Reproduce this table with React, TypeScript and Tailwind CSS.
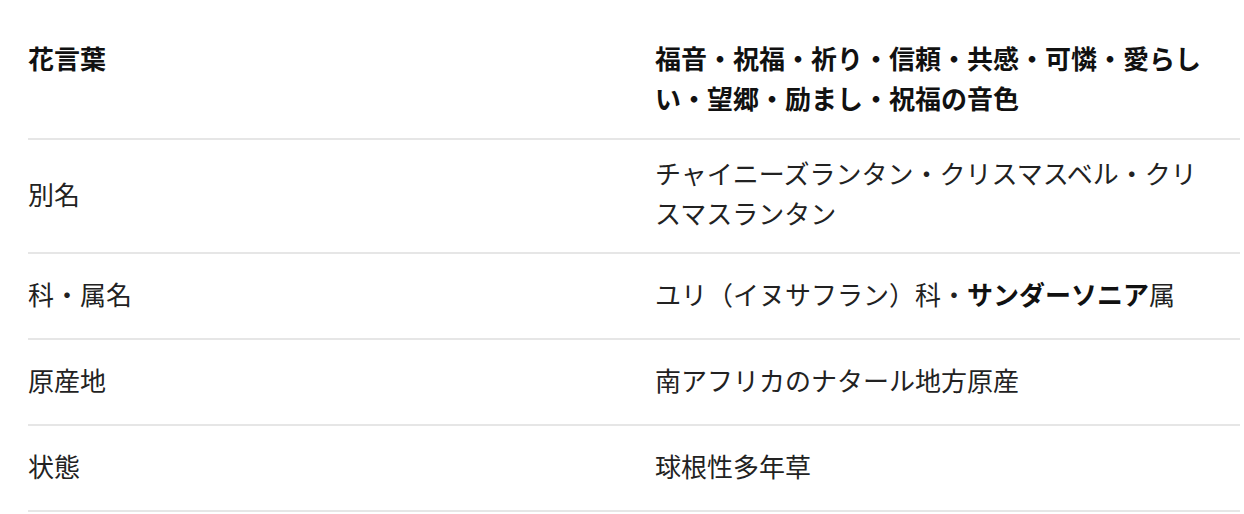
import React from "react";

const Row = ({
  label,
  children,
  header = false,
  pad = "pb-[4px]",
}: {
  label: string;
  children: React.ReactNode;
  header?: boolean;
  pad?: string;
}) => (
  <div
    className={`flex min-h-[86px] border-b-2 border-[#e6e6e6] ${
      header ? "items-start font-bold text-[#111]" : "items-center text-[#222]"
    }`}
  >
    <div className={`w-[627px] shrink-0 ${header ? pad : "pb-[4px]"}`}>{label}</div>
    <div className={`flex-1 pr-[21px] ${pad}`}>{children}</div>
  </div>
);

export default function App() {
  return (
    <div
      className="bg-white w-[1244px] h-[514px] overflow-hidden"
      style={{ fontFamily: '"Noto Sans CJK JP", "Noto Sans", sans-serif' }}
    >
      <div className="ml-[28px] mt-[24px] w-[1212px] text-[26px] leading-[40px]">
        <Row label="花言葉" header pad="pt-[14px] pb-[20px]">
          福音・祝福・祈り・信頼・共感・可憐・愛らしい・望郷・励まし・祝福の音色
        </Row>
        <Row label="別名" pad="pt-[13px] pb-[19px]">
          チャイニーズランタン・クリスマスベル・クリスマスランタン
        </Row>
        <Row label="科・属名">
          ユリ（イヌサフラン）科・<span className="font-bold text-[#111]">サンダーソニア</span>属
        </Row>
        <Row label="原産地">南アフリカのナタール地方原産</Row>
        <Row label="状態">球根性多年草</Row>
      </div>
    </div>
  );
}
